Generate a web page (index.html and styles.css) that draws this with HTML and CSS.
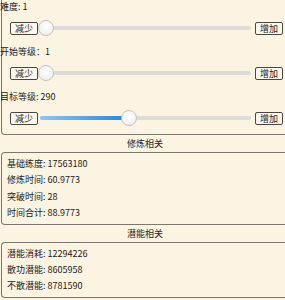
FILE: index.html
```html
<!DOCTYPE html>
<html>
<head>
<meta charset="utf-8">
<link rel="stylesheet" href="styles.css">
</head>
<body>
<div class="wrap">
  <div class="box box-top">
    <div class="group">
      <div class="label">难度: 1</div>
      <div class="row">
        <button class="btn">减少</button>
        <div class="slider">
          <div class="track"></div>
          <div class="rail">
            <div class="thumb" style="left:0%"></div>
          </div>
        </div>
        <button class="btn">增加</button>
      </div>
    </div>
    <div class="group">
      <div class="label">开始等级：1</div>
      <div class="row">
        <button class="btn">减少</button>
        <div class="slider">
          <div class="track"></div>
          <div class="rail">
            <div class="thumb" style="left:0%"></div>
          </div>
        </div>
        <button class="btn">增加</button>
      </div>
    </div>
    <div class="group last">
      <div class="label">目标等级: 290</div>
      <div class="row">
        <button class="btn">减少</button>
        <div class="slider">
          <div class="track"></div>
          <div class="rail">
            <div class="fill" style="width:41.9%"></div>
            <div class="thumb" style="left:41.9%"></div>
          </div>
        </div>
        <button class="btn">增加</button>
      </div>
    </div>
  </div>
  <div class="section-title">修炼相关</div>
  <div class="box info">
    <div class="line">基础练度: 17563180</div>
    <div class="line">修炼时间: 60.9773</div>
    <div class="line">突破时间: 28</div>
    <div class="line">时间合计: 88.9773</div>
  </div>
  <div class="section-title">潜能相关</div>
  <div class="box info">
    <div class="line">潜能消耗: 12294226</div>
    <div class="line">散功潜能: 8605958</div>
    <div class="line">不散潜能: 8781590</div>
  </div>
</div>
</body>
</html>
```

FILE: styles.css
```css
html, body {
  margin: 0;
  padding: 0;
  background: #fcf4e3;
  overflow: hidden;
}
body {
  width: 285px;
  height: 300px;
  font-family: "Noto Sans CJK SC", "Noto Sans", sans-serif;
  font-size: 9px;
  color: #1a1a1a;
}
.wrap {
  width: 285px;
}
.box {
  margin-left: 1px;
  border: 1px solid #7c766c;
  border-right: none;
  border-radius: 4px 0 0 4px;
  box-sizing: border-box;
}
.box-top {
  border-top: none;
  border-radius: 0 0 0 4px;
}
.group {
  padding-bottom: 10px;
}
.group.last {
  padding-bottom: 9px;
}
.label {
  height: 14px;
  line-height: 14px;
  margin-left: -2px;
  white-space: nowrap;
}
.row {
  margin-top: 7px;
  height: 14px;
  display: flex;
  align-items: center;
  padding-left: 8px;
}
.btn {
  width: 28px;
  height: 13px;
  padding: 0;
  margin: 0;
  border: 1px solid #4a4640;
  border-radius: 2px;
  background: #fdf8ee;
  font-family: "Noto Sans CJK SC", sans-serif;
  font-size: 9px;
  line-height: 11px;
  color: #1a1a1a;
  box-sizing: border-box;
}
.slider {
  position: relative;
  width: 213px;
  height: 16px;
  margin-right: 4px;
}
.track {
  position: absolute;
  left: 2px;
  right: 0;
  top: 6px;
  height: 4px;
  border-radius: 2px;
  background: #dedcd8;
}
.rail {
  position: absolute;
  left: 8px;
  right: 8px;
  top: 0;
  bottom: 0;
}
.fill {
  position: absolute;
  left: -6px;
  top: 6px;
  height: 4px;
  border-radius: 2px;
  background: linear-gradient(to right, #8fc6f0, #2c87de);
}
.thumb {
  position: absolute;
  top: 0;
  width: 16px;
  height: 16px;
  margin-left: -8px;
  border-radius: 50%;
  box-sizing: border-box;
  border: 1px solid #c4c2bd;
  background: radial-gradient(circle at 50% 40%, #ffffff, #ecebe8);
}
.section-title {
  height: 17px;
  line-height: 17px;
  text-align: center;
  padding-left: 5px;
}
.info {
  padding: 3px 0 2px 5px;
}
.line {
  height: 16.4px;
  line-height: 16.4px;
  white-space: nowrap;
}
```
